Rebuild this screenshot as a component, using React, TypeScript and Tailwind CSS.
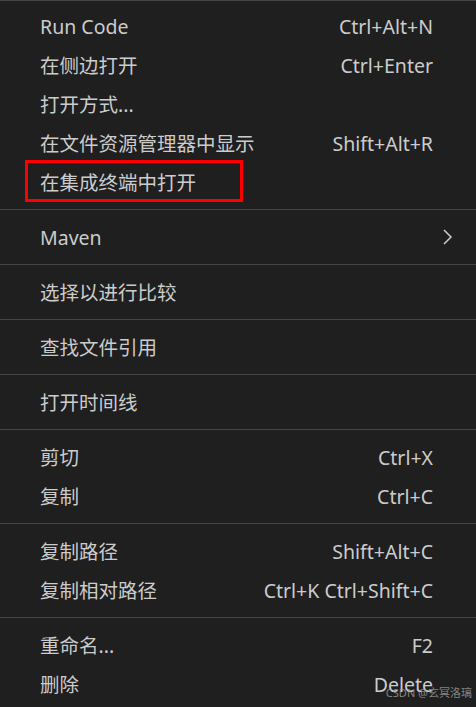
const font = "font-['Noto_Sans','Noto_Sans_CJK_SC',sans-serif]";

type Item = { label: string; keys?: string; sub?: boolean; boxed?: boolean };

const groups: Item[][] = [
  [
    { label: "Run Code", keys: "Ctrl+Alt+N" },
    { label: "在侧边打开", keys: "Ctrl+Enter" },
    { label: "打开方式..." },
    { label: "在文件资源管理器中显示", keys: "Shift+Alt+R" },
    { label: "在集成终端中打开", boxed: true },
  ],
  [{ label: "Maven", sub: true }],
  [{ label: "选择以进行比较" }],
  [{ label: "查找文件引用" }],
  [{ label: "打开时间线" }],
  [
    { label: "剪切", keys: "Ctrl+X" },
    { label: "复制", keys: "Ctrl+C" },
  ],
  [
    { label: "复制路径", keys: "Shift+Alt+C" },
    { label: "复制相对路径", keys: "Ctrl+K Ctrl+Shift+C" },
  ],
  [
    { label: "重命名...", keys: "F2" },
    { label: "删除", keys: "Delete" },
  ],
];

function Row({ item }: { item: Item }) {
  return (
    <div className="relative flex h-[39px] items-center justify-between pl-[40px] pr-[43px] pt-[3px]">
      <span>{item.label}</span>
      {item.keys && <span>{item.keys}</span>}
      {item.sub && (
        <svg
          className="absolute right-[23px] top-[12px]"
          width="11"
          height="16"
          viewBox="0 0 11 16"
          fill="none"
          stroke="#cccccc"
          strokeWidth="1.5"
        >
          <path d="M2 1 L9 8 L2 15" />
        </svg>
      )}
      {item.boxed && (
        <div className="absolute left-[25px] top-[-2px] h-[42px] w-[218px] border-[3px] border-[#ff0000]" />
      )}
    </div>
  );
}

export default function App() {
  return (
    <div className={`relative h-[707px] w-[476px] overflow-hidden bg-[#1f1f1f] ${font} text-[19.5px] text-[#cccccc]`}>
      <div className="border-t border-[#454545] pt-[5px]">
        {groups.map((g, gi) => (
          <div key={gi}>
            {gi > 0 && (
              <div className="flex h-[16px] items-center">
                <div className="h-px w-full bg-[#454545]" />
              </div>
            )}
            {g.map((item, i) => (
              <Row key={i} item={item} />
            ))}
          </div>
        ))}
      </div>
      <div className="absolute bottom-[9px] right-[4px] text-[11px] leading-none text-[#a0a0a0]/80">
        CSDN @玄冥洛璃
      </div>
    </div>
  );
}
